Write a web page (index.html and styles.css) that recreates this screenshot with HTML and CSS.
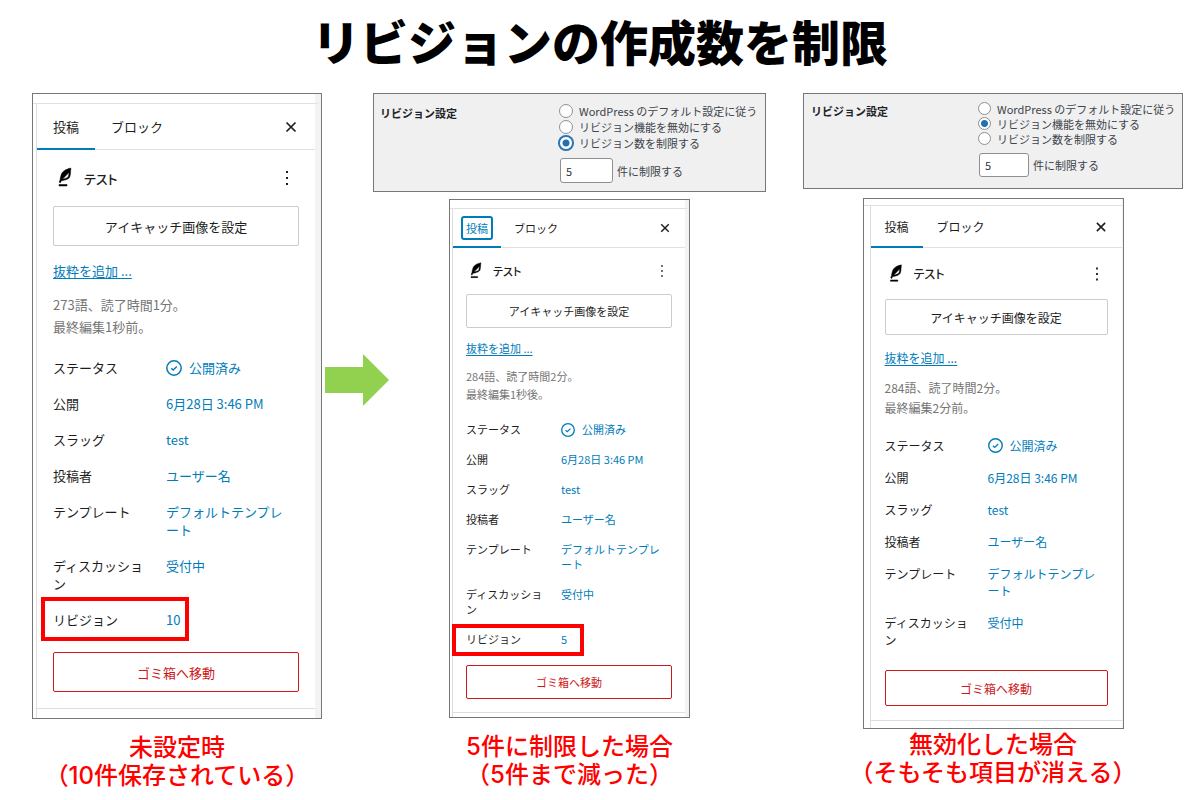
FILE: index.html
```html
<!DOCTYPE html>
<html lang="ja">
<head>
    <meta charset="UTF-8">
    <title>リビジョンの作成数を制限</title>
    <link rel="stylesheet" href="styles.css">
</head>
<body>
    <!-- shared icons -->
    <svg class="sprite" aria-hidden="true">
        <symbol id="icon-close" viewBox="0 0 24 24">
            <path d="M7.5 7.5l9 9M16.5 7.5l-9 9" fill="none" stroke="currentColor" stroke-width="1.7"/>
        </symbol>
        <symbol id="icon-more" viewBox="0 0 24 24">
            <path d="M11 5h2v2h-2zM11 11h2v2h-2zM11 17h2v2h-2z" fill="currentColor"/>
        </symbol>
        <symbol id="icon-feather" viewBox="0 0 24 24">
            <path d="M17.8 2l-.9.3c-.1 0-3.6 1-5.2 2.1C10 5.5 9.3 6.5 8.9 7.1c-.6.9-1.7 4.7-1.7 6.3l-.9 2.3c-.2.4 0 .8.4 1 .1 0 .2.1.3.1.3 0 .6-.2.7-.5l.6-1.5c.3 0 .7-.1 1.2-.2.7-.1 1.4-.3 2.2-.5.8-.2 1.6-.5 2.4-.8.7-.3 1.4-.7 1.9-1.2s.8-1.2 1-1.9c.2-.7.3-1.6.4-2.4.1-.8.1-1.7.2-2.5 0-.8.1-1.5.2-2.1V2zm-1.9 5.6c-.1.8-.2 1.5-.3 2.1-.2.6-.4 1-.6 1.3-.3.3-.8.6-1.4.9-.7.3-1.4.5-2.2.8-.6.2-1.3.3-1.8.4L15 7.5c.3-.3.6-.7 1-1.1 0 .4 0 .8-.1 1.2zM6 20h8v-1.5H6V20z" fill="#000" stroke="#000" stroke-width=".5"/>
        </symbol>
        <symbol id="icon-published" viewBox="0 0 16 16">
            <circle cx="8" cy="8" r="7.2" fill="none" stroke="currentColor" stroke-width="1.5"/>
            <path d="M5.2 8.2l2 1.8 3.6-3.6" fill="none" stroke="currentColor" stroke-width="1.4"/>
        </symbol>
    </svg>

    <h1>リビジョンの作成数を制限</h1>

    <main class="compare">
        <section class="column before">
            <div class="panel large">
                <div class="strip"></div>
                <div class="sidebar">
                    <div class="tabs">
                        <button class="tab active"><span>投稿</span></button>
                        <button class="tab"><span>ブロック</span></button>
                        <button class="icon-btn" aria-label="閉じる"><svg><use href="#icon-close"/></svg></button>
                    </div>
                    <div class="content">
                        <div class="post-title">
                            <svg><use href="#icon-feather"/></svg>
                            <h2>テスト</h2>
                            <button class="icon-btn" aria-label="操作"><svg><use href="#icon-more"/></svg></button>
                        </div>
                        <button class="wide-btn">アイキャッチ画像を設定</button>
                        <a class="excerpt" href="#">抜粋を追加 ...</a>
                        <p class="info">273語、読了時間1分。<br>最終編集1秒前。</p>
                        <dl class="rows">
                            <div class="row"><dt>ステータス</dt><dd><button><svg><use href="#icon-published"/></svg>公開済み</button></dd></div>
                            <div class="row"><dt>公開</dt><dd><button>6月28日 3:46 PM</button></dd></div>
                            <div class="row"><dt>スラッグ</dt><dd><button>test</button></dd></div>
                            <div class="row"><dt>投稿者</dt><dd><button>ユーザー名</button></dd></div>
                            <div class="row"><dt>テンプレート</dt><dd><button>デフォルトテンプレート</button></dd></div>
                            <div class="row"><dt>ディスカッション</dt><dd><button>受付中</button></dd></div>
                            <div class="row marked"><dt>リビジョン</dt><dd><button>10</button></dd></div>
                        </dl>
                        <button class="wide-btn trash">ゴミ箱へ移動</button>
                    </div>
                    <div class="foot"></div>
                </div>
            </div>
            <p class="caption">未設定時<br>（10件保存されている）</p>
        </section>

        <svg class="arrow" viewBox="0 0 64 52" aria-hidden="true">
            <path d="M0 13h38V0l26 26-26 26V39H0z" fill="#92d050"/>
        </svg>

        <section class="column limited">
            <form class="settings">
                <h2>リビジョン設定</h2>
                <div class="options">
                    <label><input type="radio" name="rev"> WordPress のデフォルト設定に従う</label>
                    <label><input type="radio" name="rev"> リビジョン機能を無効にする</label>
                    <label><input type="radio" name="rev" class="focused" checked> リビジョン数を制限する</label>
                    <label class="count"><input type="text" value="5">件に制限する</label>
                </div>
            </form>
            <div class="panel small">
                <div class="strip"></div>
                <div class="sidebar">
                    <div class="tabs">
                        <button class="tab active focused"><span>投稿</span></button>
                        <button class="tab"><span>ブロック</span></button>
                        <button class="icon-btn" aria-label="閉じる"><svg><use href="#icon-close"/></svg></button>
                    </div>
                    <div class="content">
                        <div class="post-title">
                            <svg><use href="#icon-feather"/></svg>
                            <h2>テスト</h2>
                            <button class="icon-btn" aria-label="操作"><svg><use href="#icon-more"/></svg></button>
                        </div>
                        <button class="wide-btn">アイキャッチ画像を設定</button>
                        <a class="excerpt" href="#">抜粋を追加 ...</a>
                        <p class="info">284語、読了時間2分。<br>最終編集1秒後。</p>
                        <dl class="rows">
                            <div class="row"><dt>ステータス</dt><dd><button><svg><use href="#icon-published"/></svg>公開済み</button></dd></div>
                            <div class="row"><dt>公開</dt><dd><button>6月28日 3:46 PM</button></dd></div>
                            <div class="row"><dt>スラッグ</dt><dd><button>test</button></dd></div>
                            <div class="row"><dt>投稿者</dt><dd><button>ユーザー名</button></dd></div>
                            <div class="row"><dt>テンプレート</dt><dd><button>デフォルトテンプレート</button></dd></div>
                            <div class="row"><dt>ディスカッション</dt><dd><button>受付中</button></dd></div>
                            <div class="row marked"><dt>リビジョン</dt><dd><button>5</button></dd></div>
                        </dl>
                        <button class="wide-btn trash">ゴミ箱へ移動</button>
                    </div>
                    <div class="foot"></div>
                </div>
            </div>
            <p class="caption">5件に制限した場合<br>（5件まで減った）</p>
        </section>

        <section class="column disabled">
            <form class="settings compact">
                <h2>リビジョン設定</h2>
                <div class="options">
                    <label><input type="radio" name="rev"> WordPress のデフォルト設定に従う</label>
                    <label><input type="radio" name="rev" checked> リビジョン機能を無効にする</label>
                    <label><input type="radio" name="rev"> リビジョン数を制限する</label>
                    <label class="count"><input type="text" value="5">件に制限する</label>
                </div>
            </form>
            <div class="panel medium">
                <div class="strip"></div>
                <div class="sidebar">
                    <div class="tabs">
                        <button class="tab active"><span>投稿</span></button>
                        <button class="tab"><span>ブロック</span></button>
                        <button class="icon-btn" aria-label="閉じる"><svg><use href="#icon-close"/></svg></button>
                    </div>
                    <div class="content">
                        <div class="post-title">
                            <svg><use href="#icon-feather"/></svg>
                            <h2>テスト</h2>
                            <button class="icon-btn" aria-label="操作"><svg><use href="#icon-more"/></svg></button>
                        </div>
                        <button class="wide-btn">アイキャッチ画像を設定</button>
                        <a class="excerpt" href="#">抜粋を追加 ...</a>
                        <p class="info">284語、読了時間2分。<br>最終編集2分前。</p>
                        <dl class="rows">
                            <div class="row"><dt>ステータス</dt><dd><button><svg><use href="#icon-published"/></svg>公開済み</button></dd></div>
                            <div class="row"><dt>公開</dt><dd><button>6月28日 3:46 PM</button></dd></div>
                            <div class="row"><dt>スラッグ</dt><dd><button>test</button></dd></div>
                            <div class="row"><dt>投稿者</dt><dd><button>ユーザー名</button></dd></div>
                            <div class="row"><dt>テンプレート</dt><dd><button>デフォルトテンプレート</button></dd></div>
                            <div class="row"><dt>ディスカッション</dt><dd><button>受付中</button></dd></div>
                        </dl>
                        <button class="wide-btn trash">ゴミ箱へ移動</button>
                    </div>
                    <div class="foot"></div>
                </div>
            </div>
            <p class="caption">無効化した場合<br>（そもそも項目が消える）</p>
        </section>
    </main>
</body>
</html>
```

FILE: styles.css
```css
*, *::after {
    box-sizing: border-box;
}
body {
    margin: 0;
    background-color: #fff;
    color: #1e1e1e;
    font-family: "Noto Sans CJK JP", "Noto Sans", sans-serif;
}
h1, h2, p, dl, dd {
    margin: 0;
}
button {
    margin: 0;
    padding: 0;
    border: none;
    background: none;
    color: inherit;
    font: inherit;
    cursor: pointer;
}
.sprite {
    display: none;
}
h1 {
    padding: 4px 0 17px;
    color: #000;
    font-size: 48px;
    font-weight: 900;
    line-height: 72px;
    text-align: center;
}

/* columns */
.compare {
    display: flex;
    align-items: flex-start;
    padding: 0 17px 0 32px;
}
.column {
    min-width: 0;
}
.before {
    flex: 290 1 0;
}
.limited {
    flex: 393 1 0;
}
.disabled {
    flex: 380 1 0;
    margin-left: 37px;
}
.arrow {
    flex: none;
    width: 64px;
    height: 52px;
    margin: 261px -16px 0 3px;
}
.caption {
    margin-top: 15px;
    color: #f00;
    font-family: Inter, "Noto Sans CJK JP", sans-serif;
    font-size: 24px;
    font-weight: 500;
    line-height: 28px;
    text-align: center;
    white-space: nowrap;
}
.disabled .caption {
    margin-top: 2px;
}

/* revision settings */
.settings {
    --line: 16px;
    --radio: 14px;
    display: flex;
    margin-bottom: 7px;
    padding: 9px 0 8px 6px;
    border: 1px solid #777;
    background-color: #f0f0f1;
    color: #3c434a;
    font-size: 11px;
}
.settings h2 {
    width: 179px;
    padding-top: 2px;
    color: #1d2327;
    font-size: 11px;
    font-weight: 700;
    line-height: 16px;
}
.options label {
    display: flex;
    align-items: center;
    gap: 6px;
    height: var(--line);
    white-space: nowrap;
}
.options input {
    margin: 0;
    border: 1px solid #8c8f94;
    background-color: #fff;
}
.options input[type="radio"] {
    appearance: none;
    width: var(--radio);
    height: var(--radio);
    border-radius: 50%;
}
.options input[type="radio"]:checked {
    background-image: radial-gradient(circle, #2271b1 3px, transparent 4px);
}
.options input.focused {
    border-color: #2271b1;
    box-shadow: 0 0 0 1px #2271b1;
}
.options .count {
    gap: 4px;
    height: 25px;
    margin-top: 7px;
    padding-left: 1px;
}
.count input {
    width: 53px;
    height: 25px;
    padding: 0 5px;
    border-radius: 3px;
    color: #2c3338;
    font: inherit;
}
.compact {
    --line: 15px;
    --radio: 13px;
    margin-bottom: 9px;
    padding: 7px 0 11px 7px;
}
.compact h2 {
    width: 167px;
}
.compact .count {
    margin-top: 6px;
}
.compact .count input {
    width: 50px;
    height: 24px;
}

/* editor sidebar, in three sizes */
.panel {
    width: 100%;
    margin: 0 auto;
    border: 1px solid #777;
    font-size: var(--font);
}
.large {
    --font: 13px;
    --icon: 24px;
    --check: 16px;
    --pad: 16px;
    --strip: 10px;
    --tabs: 46px;
    --title: 56px;
    --btn: 40px;
    --line: 22px;
    --link-top: 14px;
    --info-top: 12px;
    --row: 18px;
    --row-gap: 18px;
    --label: 113px;
    --rows-top: 21px;
    --trash-top: 23px;
    --foot: 10px;
    --edge: 3px;
    --track: 6px;
}
.small {
    --font: 11px;
    --icon: 20px;
    --check: 14px;
    --pad: 13px;
    --strip: 9px;
    --tabs: 39px;
    --title: 46px;
    --btn: 34px;
    --line: 18px;
    --link-top: 11px;
    --info-top: 10px;
    --row: 15px;
    --row-gap: 15px;
    --label: 95px;
    --rows-top: 19px;
    --trash-top: 18px;
    --foot: 5px;
    --edge: 2px;
    --track: 4px;
    max-width: 241px;
}
.medium {
    --font: 12px;
    --icon: 22px;
    --check: 15px;
    --pad: 14px;
    --strip: 7px;
    --tabs: 42px;
    --title: 51px;
    --btn: 36px;
    --line: 20px;
    --link-top: 13px;
    --info-top: 10px;
    --row: 17px;
    --row-gap: 15px;
    --label: 103px;
    --rows-top: 19px;
    --trash-top: 22px;
    --foot: 8px;
    --edge: 6px;
    --track: 1px;
    max-width: 261px;
}
.strip {
    height: var(--strip);
    border-right: var(--track) solid #f3f3f3;
    border-bottom: 1px solid #e0e0e0;
}
.sidebar {
    margin-left: var(--edge);
    border-left: 1px solid #ddd;
    border-right: var(--track) solid #f3f3f3;
}
.tabs {
    display: flex;
    align-items: stretch;
    height: var(--tabs);
    border-bottom: 1px solid #e0e0e0;
}
.tab {
    margin-bottom: -1px;
    padding: 0 var(--pad);
    border-bottom: 2px solid transparent;
}
.tab.active {
    border-bottom-color: #007cba;
}
.tab.focused span {
    display: block;
    margin: 0 -5px;
    padding: 2px 3px;
    border: 2px solid #007cba;
    border-radius: 3px;
    color: #007cba;
    line-height: 16px;
}
.icon-btn {
    display: flex;
    align-items: center;
    margin-left: auto;
}
.tabs .icon-btn {
    margin-right: 12px;
}
.small .tabs .icon-btn, .medium .tabs .icon-btn {
    margin-right: 10px;
}
.tabs svg, .post-title svg {
    width: var(--icon);
    height: var(--icon);
}
.content {
    padding: 0 var(--pad) var(--pad);
    border-bottom: 1px solid #ddd;
}
.post-title {
    display: flex;
    align-items: center;
    height: var(--title);
}
.post-title h2 {
    margin-left: 7px;
    font-size: var(--font);
    font-weight: 500;
    font-feature-settings: "palt";
}
.post-title .icon-btn {
    margin-right: 0;
}
.wide-btn {
    display: block;
    width: 100%;
    height: var(--btn);
    border: 1px solid #ccc;
    border-radius: 2px;
}
.wide-btn.trash {
    margin-top: var(--trash-top);
    border-color: #cc1818;
    color: #cc1818;
}
.excerpt {
    display: block;
    margin-top: var(--link-top);
    color: #007cba;
    line-height: var(--line);
    text-underline-offset: 2px;
}
.info {
    margin-top: var(--info-top);
    color: #757575;
    line-height: var(--line);
}
.rows {
    display: flex;
    flex-direction: column;
    gap: var(--row-gap);
    margin-top: var(--rows-top);
    line-height: var(--row);
    word-break: break-all;
}
.row {
    display: grid;
    grid-template-columns: var(--label) 1fr;
    position: relative;
}
.row dt {
    padding-right: 12px;
}
.row dd {
    padding-right: 6px;
    color: #007cba;
}
.row button {
    display: block;
    text-align: left;
}
.row button:has(svg) {
    display: flex;
    align-items: center;
    gap: 7px;
}
.row svg {
    width: var(--check);
    height: var(--check);
}
/* red frame round the revision count */
.marked::after {
    content: "";
    position: absolute;
    top: -14px;
    bottom: -12px;
    left: -12px;
    width: 148px;
    border: 4px solid #f00;
}
.small .marked::after {
    top: -8px;
    bottom: -9px;
    left: -14px;
    width: 132px;
}
.foot {
    height: calc(var(--foot) - 1px);
}
```
